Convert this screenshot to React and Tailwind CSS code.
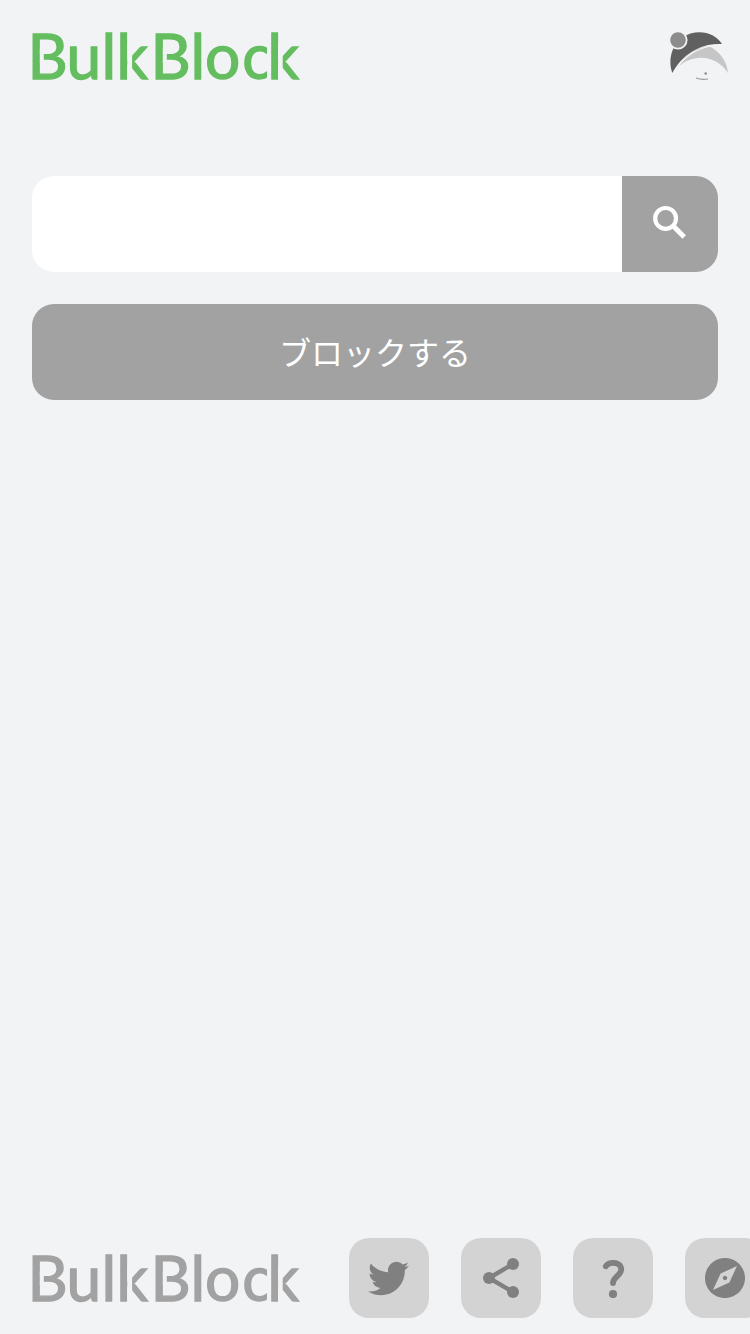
import React from "react";
import { MdExplore } from "react-icons/md";
import { FaTwitter } from "react-icons/fa";

const Logo = ({ className }) => {
    return (
        <svg className={`overflow-visible ${className}`} width="269" height="48" viewBox="0 0 269 48">
            <text
                x="-4.6 34.5 69.6 84.5 118.4 158.6 172.9 210.2 235.4"
                y="46.8"
                fontSize="62.2"
                fontFamily="Lato, sans-serif"
                fill="currentColor"
                stroke="currentColor"
                strokeWidth="1.3"
            >
                BulkBlock
            </text>
            {/* stencil gaps of the wordmark */}
            <g fill="#f1f3f5">
                <rect x="7.8" y="17" width="4" height="14" />
                <rect x="130.8" y="17" width="4" height="14" />
                <rect x="95.3" y="12" width="4.8" height="37" />
                <rect x="235" y="12" width="3.9" height="37" />
                <rect x="246.1" y="12" width="4.6" height="37" />
            </g>
        </svg>
    );
};

const Avatar = () => {
    return (
        <svg className="shrink-0" width="64" height="52" viewBox="0 0 64 52">
            <path d="M10 38C17 26 28 17 41 16C52 20 60 31 61 43C49 24 25 23 10 38Z" fill="#c6c6c6" />
            <path
                d="M5.3 43C1 31 4 17 14 8C30 -2 47 2 55 14C33 13 16 24 5.3 43"
                fill="#606060"
            />
            <path d="M6 44C16.5 25 33 15 56 14.6" fill="none" stroke="#f4f5f6" strokeWidth="1.4" />
            <circle cx="11" cy="10" r="9.6" fill="#f1f3f5" />
            <circle cx="11" cy="10" r="7.8" fill="#8c8c8c" />
            <path d="M29 48Q34 50 41 49" fill="none" stroke="#999" strokeWidth="1.2" />
            <circle cx="38.7" cy="43.5" r="1.2" fill="#888" />
        </svg>
    );
};

const SearchIcon = () => {
    return (
        <svg width="34" height="34" viewBox="0 0 34 34" fill="none" stroke="currentColor">
            <circle cx="12.6" cy="13.4" r="10.4" strokeWidth="4.2" />
            <path d="M20 20.8L31.2 32" strokeWidth="5" />
        </svg>
    );
};

const ShareIcon = () => {
    return (
        <svg width="40" height="40" viewBox="0 0 40 40" fill="currentColor">
            <path d="M32 6L8 20L32 34" fill="none" stroke="currentColor" strokeWidth="4.4" />
            <circle cx="32" cy="6" r="6" />
            <circle cx="8" cy="20" r="6" />
            <circle cx="32" cy="34" r="6" />
        </svg>
    );
};

const QuestionIcon = () => {
    return (
        <svg width="40" height="40" viewBox="0 0 40 40" fill="none">
            <path
                d="M12.8 8.2C14.3 5.7 16.8 4.8 20 4.8C28 4.8 30.4 11.3 26 16.2C23.3 19.2 20 21 20 25"
                stroke="currentColor"
                strokeWidth="5.8"
                strokeLinecap="round"
            />
            <circle cx="20" cy="36" r="4.1" fill="currentColor" />
        </svg>
    );
};

const IconButton = ({ label, children }) => {
    return (
        <button aria-label={label} className="flex h-20 w-20 shrink-0 items-center justify-center rounded-[20px] bg-[#d3d3d3] text-[#808080]">
            {children}
        </button>
    );
};

export default function App() {
    return (
        <div className="flex h-screen flex-col overflow-hidden bg-[#f1f3f5]">
            <header className="flex items-start justify-between pt-[30px] pr-[19px] pl-8">
                <Logo className="mt-0.5 text-[#64bd5f]" />
                <Avatar />
            </header>
            <main className="flex flex-1 flex-col gap-8 pt-[94px] pr-8 pl-8">
                <div className="flex h-24 shrink-0 overflow-hidden rounded-[22px]">
                    <input aria-label="search" className="min-w-0 flex-1 bg-white px-6 text-3xl outline-none" />
                    <button aria-label="search" className="flex w-24 items-center justify-center bg-[#a2a2a2] pb-1 text-white">
                        <SearchIcon />
                    </button>
                </div>
                <button className="h-24 shrink-0 rounded-[22px] bg-[#a2a2a2] pb-0.5 font-['Noto_Sans_CJK_JP',sans-serif] text-[32px] text-white">
                    ブロックする
                </button>
            </main>
            <footer className="flex items-center gap-12 pb-4 pl-8">
                <Logo className="shrink-0 text-[#a2a2a2]" />
                <div className="flex gap-8">
                    <IconButton label="twitter">
                        <FaTwitter size={41} className="mr-0.5" />
                    </IconButton>
                    <IconButton label="share">
                        <ShareIcon />
                    </IconButton>
                    <IconButton label="help">
                        <QuestionIcon />
                    </IconButton>
                    <IconButton label="explore">
                        <MdExplore size={48} />
                    </IconButton>
                </div>
            </footer>
        </div>
    );
}
